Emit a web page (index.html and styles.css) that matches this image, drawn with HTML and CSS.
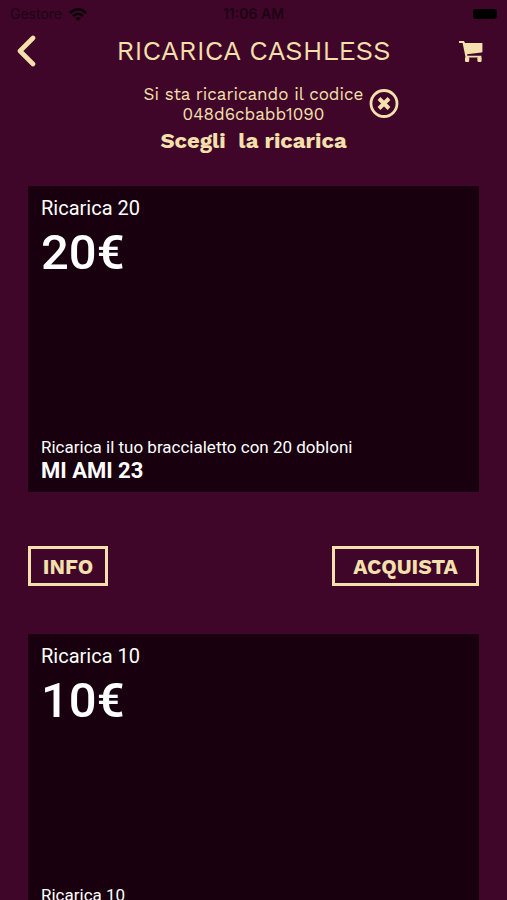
FILE: index.html
```html
<!DOCTYPE html>
<html lang="it">
<head>
  <meta charset="UTF-8" />
  <meta name="viewport" content="width=device-width, initial-scale=1" />
  <title>Ricarica Cashless</title>
  <link rel="stylesheet" href="styles.css">
</head>
<body>
  <div class="status-bar">
    <div class="carrier">
      <span>Gestore</span>
      <svg width="18" height="13" viewBox="0 0 18 13" fill="none" stroke="#080006" stroke-width="2.4">
        <path d="M1 5 Q9 -2.4 17 5" />
        <path d="M4 8 Q9 3.4 14 8" />
        <path d="M9 13 L6.2 10.2 Q9 7.8 11.8 10.2 Z" fill="#080006" stroke="none" />
      </svg>
    </div>
    <div class="clock">11:06 AM</div>
    <div class="battery"></div>
  </div>

  <header class="title-bar">
    <button class="icon-button" aria-label="Indietro">
      <svg width="20" height="32" viewBox="0 0 20 32" fill="none" stroke="#f4e0ad" stroke-width="4.6" stroke-linecap="round" stroke-linejoin="round">
        <path d="M17 3 L4 16 L17 29" />
      </svg>
    </button>
    <h1>RICARICA CASHLESS</h1>
    <button class="icon-button cart" aria-label="Carrello">
      <svg width="24" height="21" viewBox="0 0 24 21" fill="#f4e0ad">
        <path d="M0 0 H5 L6 2 H23.4 V10.4 Q23.4 11.3 22.4 11.5 L8 13.2 L8.4 14.8 H22.4 V16.6 H6.6 L3.6 2 H0 Z" />
        <rect x="6" y="16" width="4.2" height="5" rx="1.2" />
        <rect x="18.4" y="16" width="4.2" height="5" rx="1.2" />
      </svg>
    </button>
  </header>

  <section class="intro">
    <div class="code-row">
      <p>Si sta ricaricando il codice<br>048d6cbabb1090</p>
      <button class="icon-button" aria-label="Rimuovi codice">
        <svg width="30" height="30" viewBox="0 0 30 30" fill="none" stroke="#f4e0ad">
          <circle cx="15" cy="14.5" r="13" stroke-width="2.8" />
          <path d="M10 9.5 L20 19.5 M20 9.5 L10 19.5" stroke-width="4" />
        </svg>
      </button>
    </div>
    <h2>Scegli&nbsp; la ricarica</h2>
  </section>

  <main>
    <article>
      <div class="card">
        <h3>Ricarica 20</h3>
        <div class="price">20€</div>
        <p class="description">Ricarica il tuo braccialetto con 20 dobloni</p>
        <div class="event">MI AMI 23</div>
      </div>
      <div class="actions">
        <button class="outline-button">INFO</button>
        <button class="outline-button buy">ACQUISTA</button>
      </div>
    </article>

    <article>
      <div class="card">
        <h3>Ricarica 10</h3>
        <div class="price">10€</div>
        <p class="description">Ricarica 10</p>
        <div class="event">MI AMI 23</div>
      </div>
      <div class="actions">
        <button class="outline-button">INFO</button>
        <button class="outline-button buy">ACQUISTA</button>
      </div>
    </article>
  </main>
</body>
</html>
```

FILE: styles.css
```css
* {
  box-sizing: border-box;
}
html {
  scrollbar-width: none;
}
body {
  margin: 0;
  background: #400629;
  color: #f4e0ad;
  font-family: "Work Sans", Inter, sans-serif;
}
h1, h2, h3, p {
  margin: 0;
}
button {
  font-family: inherit;
  color: inherit;
  background: none;
  cursor: pointer;
}
svg {
  display: block;
}
.status-bar {
  display: grid;
  grid-template-columns: 1fr auto 1fr;
  align-items: center;
  height: 28px;
  padding: 0 10px;
  color: #1c0213;
  font: 14px/28px Inter, sans-serif;
}
.carrier {
  display: flex;
  align-items: center;
  gap: 7px;
}
.clock {
  font-weight: 600;
}
.battery {
  justify-self: end;
  width: 24px;
  height: 10px;
  border-radius: 3px;
  background: #000;
}
.title-bar {
  display: grid;
  grid-template-columns: 1fr auto 1fr;
  align-items: center;
  height: 46px;
  padding: 0 24px 0 16px;
}
.title-bar h1 {
  padding-left: 8px;
  font-size: 27px;
  font-weight: 400;
  line-height: 32px;
}
.icon-button {
  display: flex;
  padding: 0;
  border: none;
}
.cart {
  justify-self: end;
}
.intro {
  padding-top: 10px;
  text-align: center;
}
.code-row {
  display: flex;
  align-items: center;
  justify-content: center;
  gap: 6px;
  padding-left: 36px;
}
.code-row p {
  font-size: 17px;
  font-weight: 400;
  line-height: 20px;
}
.intro h2 {
  font-size: 22px;
  font-weight: 700;
  line-height: 34px;
}
main {
  display: flex;
  flex-direction: column;
  gap: 48px;
  padding: 28px;
}
.card {
  display: flex;
  flex-direction: column;
  min-height: 306px;
  padding: 10px 13px 8px;
  background: #18000f;
  color: #fff;
  font-family: Roboto, sans-serif;
}
.card h3 {
  font-size: 20px;
  font-weight: 400;
  line-height: 24px;
}
.price {
  font-size: 49px;
  font-weight: 500;
  line-height: 66px;
}
.description {
  margin-top: auto;
  font-size: 17px;
  line-height: 22px;
}
.event {
  font-size: 22px;
  font-weight: 700;
  line-height: 26px;
}
.actions {
  display: flex;
  justify-content: space-between;
  padding-top: 54px;
}
.outline-button {
  height: 40px;
  min-width: 80px;
  padding: 0 11px;
  border: 3px solid #f4e0ad;
  font-size: 21px;
  font-weight: 700;
}
.outline-button.buy {
  min-width: 147px;
}
```
